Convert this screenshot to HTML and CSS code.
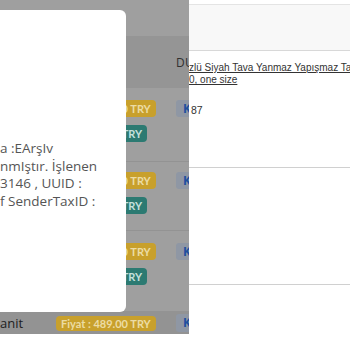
FILE: index.html
```html
<!DOCTYPE html>
<html lang="tr">

<head>
    <meta charset="utf-8">
    <meta name="viewport" content="width=device-width, initial-scale=1">
    <title>Ürün Listesi</title>
    <link rel="stylesheet" href="styles.css">
</head>

<body>
    <div class="screen">
        <section class="list">
            <div class="list-top"></div>
            <div class="list-head">
                <span class="col-name"></span>
                <span class="col-price"></span>
                <span class="col-act">Du</span>
            </div>
            <div class="row row-1">
                <div class="col-name"></div>
                <div class="col-price">
                    <span class="badge gold">Fiyat : 489.00 TRY</span>
                    <span class="badge teal">Stok : 39.00 TRY</span>
                </div>
                <div class="col-act"><span class="kbtn">K</span></div>
            </div>
            <div class="row row-2">
                <div class="col-name"></div>
                <div class="col-price">
                    <span class="badge gold">Fiyat : 489.00 TRY</span>
                    <span class="badge teal">Stok : 39.00 TRY</span>
                </div>
                <div class="col-act"><span class="kbtn">K</span></div>
            </div>
            <div class="row row-3">
                <div class="col-name"></div>
                <div class="col-price">
                    <span class="badge gold">Fiyat : 489.00 TRY</span>
                    <span class="badge teal">Stok : 39.00 TRY</span>
                </div>
                <div class="col-act"><span class="kbtn">K</span></div>
            </div>
            <div class="row row-hot">
                <div class="col-name">anit</div>
                <div class="col-price">
                    <span class="badge gold">Fiyat : 489.00 TRY</span>
                </div>
                <div class="col-act"><span class="kbtn">K</span></div>
            </div>

            <div class="modal">
                <p class="modal-text">
                    <span>a :EArşIv</span>
                    <span>nmIştır. İşlenen</span>
                    <span>3146 , UUID :</span>
                    <span>f SenderTaxID :</span>
                </p>
            </div>
        </section>

        <section class="detail">
            <div class="detail-head"></div>
            <div class="detail-row">
                <a href="#">zlü Siyah Tava Yanmaz Yapışmaz Tava 28 cm<br>0, one size</a>
                <p class="stock">87</p>
            </div>
            <div class="detail-row"></div>
        </section>
    </div>
</body>

</html>
```

FILE: styles.css
```css
body {
    margin: 0;
    background-color: white;
    overflow: hidden;
}

.screen {
    display: flex;
    width: 350px;
    height: 350px;
}

/* left side, dimmed by the modal backdrop */
.list {
    position: relative;
    flex: 0 0 189px;
    height: 334px;
    overflow: hidden;
    display: flex;
    flex-direction: column;
    background-color: #9f9f9f;
    font-family: "Open Sans", "Lato", sans-serif;
}

.list-top {
    flex: 0 0 36px;
}

.list-head {
    flex: 0 0 52px;
    display: flex;
    align-items: center;
    background-color: #959595;
    color: #303030;
    font-size: 12px;
    letter-spacing: 0.3px;
    text-transform: uppercase;
}

.col-name {
    flex: 0 0 56px;
    white-space: nowrap;
}

.col-price {
    flex: 0 0 120px;
    display: flex;
    flex-direction: column;
    align-items: flex-start;
    gap: 8px;
}

.col-act {
    flex: 0 0 40px;
}

.row {
    display: flex;
    align-items: flex-start;
    padding-top: 12px;
    box-sizing: border-box;
    border-bottom: 1px solid #939393;
}

.row-1 {
    flex: 0 0 74px;
}

.row-2 {
    flex: 0 0 69px;
    padding-top: 10px;
}

.row-3 {
    flex: 0 0 81px;
}

.row-hot {
    flex: 0 0 22px;
    align-items: center;
    padding-top: 0;
    border-bottom: none;
    background-color: #939393;
}

.row-hot .col-name {
    color: #1e1e1e;
    font-size: 13px;
}

.row-hot .badge {
    height: 15px;
    line-height: 15px;
}

.row-hot .kbtn {
    height: 18px;
}

.badge {
    height: 17px;
    padding: 0 5px;
    border-radius: 4px;
    font-family: "Lato", "Open Sans", sans-serif;
    font-size: 11px;
    font-weight: bold;
    line-height: 17px;
    white-space: nowrap;
}

.gold {
    background-color: #c8a02c;
    color: #ecdca4;
}

.teal {
    background-color: #2c7a72;
    color: #c4e0dc;
}

.kbtn {
    display: block;
    width: 24px;
    height: 17px;
    padding-left: 7px;
    border-radius: 3px;
    background-color: #8f97a4;
    color: #1f4f9f;
    font-size: 12px;
    font-weight: bold;
    line-height: 17px;
}

.modal {
    position: absolute;
    top: 10px;
    left: 0;
    width: 126px;
    height: 302px;
    border-radius: 0 6px 6px 0;
    background-color: white;
}

.modal-text {
    margin: 0;
    padding-top: 130px;
    color: #555;
    font-size: 13.5px;
    line-height: 17.5px;
    white-space: nowrap;
}

.modal-text span {
    display: block;
}

/* right side, not dimmed */
.detail {
    flex: 1;
    overflow: hidden;
    font-family: "Liberation Sans", Arial, sans-serif;
    color: #333;
}

.detail-head {
    height: 45px;
    margin-top: 4px;
    border-top: 1px solid #e4e4e4;
    border-bottom: 1px solid #d8d8d8;
    background-color: #f8f8f8;
}

.detail-row {
    height: 105px;
    padding-top: 11px;
    border-bottom: 1px solid #d0d0d0;
}

.detail-row a {
    display: block;
    color: #333;
    font-size: 10px;
    line-height: 12px;
    white-space: nowrap;
}

.stock {
    margin: 18px 0 0 2px;
    font-size: 10.5px;
}
```
